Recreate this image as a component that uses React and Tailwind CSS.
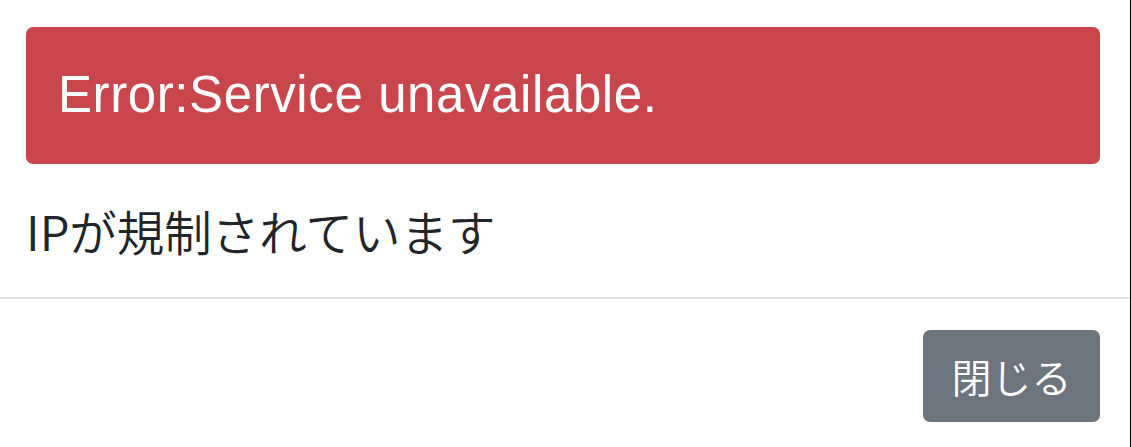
export default function App() {
  return (
    <div className="w-[1131px] h-[447px] bg-white border-r border-black flex flex-col">
      <div className="flex flex-col pt-[27px] pl-[26px] pr-[30px] h-[297px]">
        <div className="h-[137px] rounded-[7px] bg-[#c8464c] flex items-center pl-[32px] text-white text-[51px] tracking-[0.6px] font-['Liberation_Sans','Helvetica',sans-serif]">
          Error:Service unavailable.
        </div>
        <p className="mt-[39px] text-[47.5px] leading-[56px] font-[350] text-[#212529] font-['Noto_Sans_CJK_JP',sans-serif]">
          IPが規制されています
        </p>
      </div>
      <div className="h-[2px] bg-[#dfe1e3]" />
      <div className="flex justify-end pt-[31px] pr-[30px]">
        <button className="w-[177px] h-[92px] rounded-[7px] bg-[#6c757d] text-white text-[40px] font-[350] flex items-center justify-center font-['Noto_Sans_CJK_JP',sans-serif]">
          閉じる
        </button>
      </div>
    </div>
  );
}
